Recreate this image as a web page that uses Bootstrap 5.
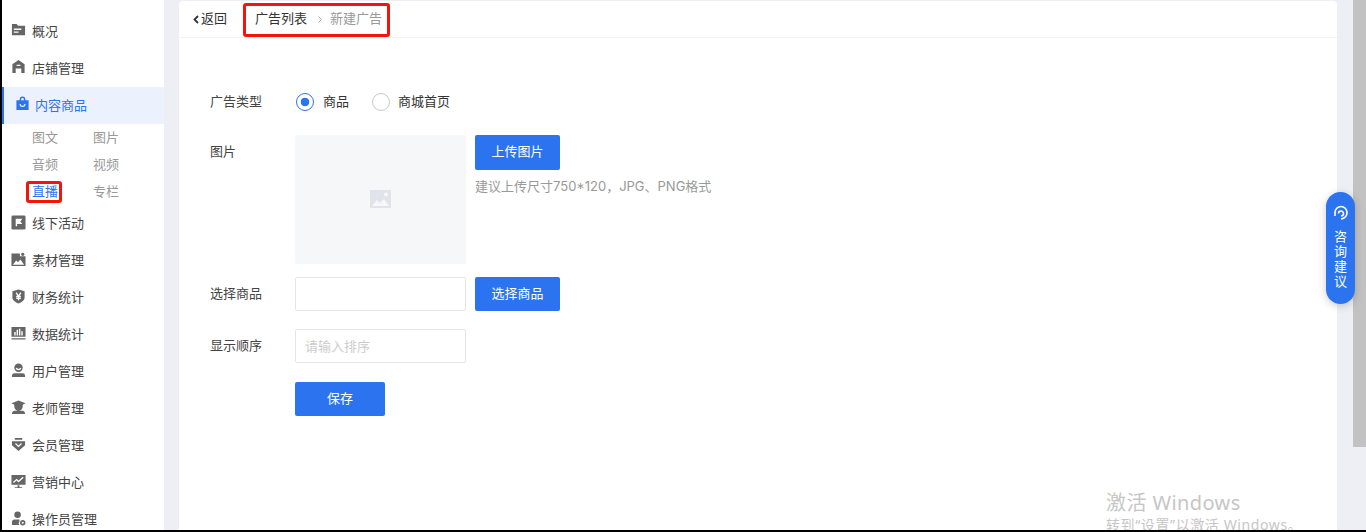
<!DOCTYPE html>
<html lang="en">
<head>
<meta charset="UTF-8">
<title>新建广告</title>
<link rel="stylesheet" href="https://cdn.jsdelivr.net/npm/bootstrap@5.3.0/dist/css/bootstrap.min.css">
<script defer src="https://cdn.jsdelivr.net/npm/bootstrap@5.3.0/dist/js/bootstrap.bundle.min.js"></script>
<style>
html, body { height: 532px; overflow: hidden; }
body { font-family: "Noto Sans", "Noto Sans CJK SC", sans-serif; font-size: 13px; color: #333; background: #000; }
.shell { height: 530px; margin-left: 2px; background: #eeeff4; overflow: hidden; }
.side { width: 162px; flex: none; background: #fff; padding-top: 13px; }
.side-item { height: 37px; display: flex; align-items: center; padding-left: 9px; gap: 6px; color: #444; }
.side-item svg { width: 15px; height: 15px; flex: none; fill: #666; margin-top: -4px; }
.side-item.on { background: #ebf2fe; color: #2c74ef; border-left: 2px solid #2c74ef; padding-left: 11px; gap: 5px; }
.side-item.on svg { fill: #2c74ef; }
.sub-grid { display: grid; grid-template-columns: 61px 61px; grid-auto-rows: 27px; padding-left: 30px; padding-bottom: .5px; align-items: center; color: #999; }
.sub-live { color: #2c74ef; position: relative; }
.mark-box { position: absolute; border: 3px solid #f5140c; border-radius: 3px; }
.mark-live { left: -6px; top: -1px; width: 36px; height: 22px; }
.main-card { width: 1158px; margin-left: 15px; height: 540px; background: #fff; border-radius: 4px; margin-top: 1px; flex: none; }
.top-bar { height: 37px; border-bottom: 1px solid #f3f3f5; }
.back-link { width: 65px; padding-left: 14px; color: #333; gap: 2px; }
.back-link svg { width: 6px; height: 9px; fill: none; stroke: #333; stroke-width: 1.8; }
.crumb { position: relative; padding-left: 11px; gap: 8px; }
.crumb .past { color: #999; }
.crumb svg { width: 4px; height: 7px; fill: none; stroke: #aaa; stroke-width: 1; margin-left: 3px; }
.mark-crumb { left: -1px; top: -6px; width: 147px; height: 34px; }
.form-area { padding: 54px 0 0 31px; }
.lbl { width: 85px; flex: none; color: #444; }
.type-row { margin-bottom: 23px; }
.radio-dot { width: 18px; height: 18px; border-radius: 50%; border: 1px solid #c8c8c8; background: #fff; flex: none; }
.radio-dot.sel { border-color: #2c74ef; background: radial-gradient(circle, #2c74ef 0 4px, #fff 4.6px); margin-left: 1px; }
.radio-text { margin: 0 23px 0 9px; }
.pic-row { margin-bottom: 13px; }
.pic-lbl { padding-top: 7px; }
.pic-box { width: 171px; height: 129px; background: #f6f7f9; border-radius: 2px; }
.pic-box svg { width: 21px; height: 18px; fill: #e1e3ea; }
.pic-side { margin-left: 9px; }
.blue-btn { background: #2c74ef; color: #fff; border: 0; border-radius: 2px; width: 85px; height: 35px; font-size: 13px; padding: 0; }
.blue-btn:hover { background: #2c74ef; color: #fff; }
.save-btn { width: 90px; height: 34px; }
.hint { color: #999; margin-top: 7px; font-family: Inter, "Noto Sans CJK SC", sans-serif; }
.pick-row { margin-bottom: 18px; }
.pick-row .blue-btn { height: 34px; margin-left: 9px; }
.order-row { margin-bottom: 19px; }
.box-input { width: 171px; height: 34px; border: 1px solid #e5e5e5; border-radius: 2px; padding: 0 9px; font-size: 13px; font-family: inherit; outline: 0; }
.box-input::placeholder { color: #ccc; }
.track { width: 13px; flex: none; margin-left: 16px; background: #eeeff4; }
.thumb { height: 447px; background: #c2c2c2; }
.help-pill { position: absolute; left: 1326px; top: 192px; width: 29px; height: 112px; background: #2c74ef; color: #fff; border-radius: 15px; box-shadow: 0 2px 8px rgba(0,0,0,.2); padding-top: 13px; }
.help-pill svg { width: 16px; height: 16px; margin-bottom: 9px; fill: none; stroke: #fff; stroke-width: 1.6; }
.pill-text { writing-mode: vertical-rl; text-orientation: upright; letter-spacing: 2px; line-height: 1; margin-right: 2px; }
.win-mark { position: absolute; left: 1106px; top: 491px; color: #c6c6c6; line-height: 1.2; white-space: nowrap; }
.win-mark .big { font-size: 20px; margin-bottom: 2px; letter-spacing: .4px; }
.win-mark .sm { font-size: 14px; letter-spacing: .6px; }
.bottom-edge { position: absolute; left: 0; top: 530px; width: 100%; height: 2px; background: #000; }
.ic-cut { fill: #fff; }
.ic-line { fill: none; stroke: #fff; stroke-width: 1.4; }
</style>
</head>
<body>
<div class="shell d-flex">
  <aside class="side">
    <div class="side-item"><svg viewBox="0 0 16 16"><path d="M1 2h5l1.500 2H15v10H1zM3 7v1.500h8V7zM3 10v1.500h5V10z" fill-rule="evenodd"/></svg>概况</div>
    <div class="side-item"><svg viewBox="0 0 16 16"><path d="M8 1l6.500 4.500V15H11v-5H5v5H1.500V5.500zM6 6v1.500h4V6z" fill-rule="evenodd"/></svg>店铺管理</div>
    <div class="side-item on"><svg viewBox="0 0 16 16"><path d="M5 4.500V3.500a3 3 0 0 1 6 0v1h3.500V15h-13V4.500zM6.500 4.500h3v-1a1.500 1.500 0 0 0-3 0zM4.800 8.500a3.200 3.200 0 0 0 6.400 0H10a2 2 0 0 1-4 0z" fill-rule="evenodd"/></svg>内容商品</div>
    <div class="sub-grid">
      <span>图文</span><span>图片</span>
      <span>音频</span><span>视频</span>
      <span class="sub-live">直播<span class="mark-box mark-live"></span></span><span>专栏</span>
    </div>
    <div class="side-item"><svg viewBox="0 0 16 16"><rect x="0.500" y="0.500" width="15" height="15" rx="1.500"/><path class="ic-cut" d="M5 4h7l-2 2.800 2 2.700H6.500V12H5z"/></svg>线下活动</div>
    <div class="side-item"><svg viewBox="0 0 16 16"><path d="M0.500 1.500h9v3h6v10.500h-15z"/><circle cx="12.500" cy="2.500" r="1.700"/><path class="ic-cut" d="M2 13.500l3.500-4.500 2 2 2.500-3 4 5.500z"/></svg>素材管理</div>
    <div class="side-item"><svg viewBox="0 0 16 16"><path d="M8 .5l6.500 2V9c0 3-3 5-6.500 6.500C4.500 14 1.500 12 1.500 9V2.500z"/><path class="ic-line" d="M5.500 4L8 7.500 10.500 4M8 7.500V12M5.500 8h5M5.500 10h5"/></svg>财务统计</div>
    <div class="side-item"><svg viewBox="0 0 16 16"><path d="M.5 1h15v10.500H.5zM.5 13h15v1.500H.5z"/><path class="ic-cut" d="M3.500 6.500h1.500V10H3.500zM6 4h1.500v6H6zM8.500 3h1.500v7H8.500zM11 5.500h1.500V10H11z"/></svg>数据统计</div>
    <div class="side-item"><svg viewBox="0 0 16 16"><circle cx="8" cy="5" r="4.500"/><path class="ic-line" d="M5.500 5.500a2.800 2.800 0 0 0 5 0"/><path d="M4 11h8a3 3 0 0 1 3 3v1H1v-1a3 3 0 0 1 3-3z"/></svg>用户管理</div>
    <div class="side-item"><svg viewBox="0 0 16 16"><path d="M8 .5l7.500 3-3 1.500V7a4.500 4.500 0 0 1-9 0V5L.5 3.500zM4 11.500h8a3 3 0 0 1 3 2.500v1H1v-1a3 3 0 0 1 3-2.500z"/></svg>老师管理</div>
    <div class="side-item"><svg viewBox="0 0 16 16"><path d="M4 1h8v1.800H4zM1 4.500h14v4.300L8 15 1 8.800z"/><path class="ic-line" d="M4.800 7L8 10l3.200-3"/></svg>会员管理</div>
    <div class="side-item"><svg viewBox="0 0 16 16"><path d="M.5 1h15v10.500H.5zM7 12h2v2h3v1H4v-1h3z"/><path class="ic-line" d="M2.500 9l3.500-3 2 2 5-4.500"/></svg>营销中心</div>
    <div class="side-item"><svg viewBox="0 0 16 16"><circle cx="7" cy="4" r="3.500"/><path d="M4 9h5v2a3 3 0 0 0 0 4H1v-3a3 3 0 0 1 3-3z"/><circle cx="12.500" cy="12.500" r="2" fill="none" stroke="#666" stroke-width="1.800"/></svg>操作员管理</div>
  </aside>
  <main class="main-card">
    <div class="top-bar d-flex align-items-center">
      <div class="back-link d-flex align-items-center"><svg viewBox="0 0 6 9"><path d="M5 1L1.500 4.500 5 8"/></svg>返回</div>
      <div class="crumb d-flex align-items-center">
        <span>广告列表</span><svg viewBox="0 0 4 7"><path d="M.5.5l3 3-3 3"/></svg><span class="past">新建广告</span>
        <span class="mark-box mark-crumb"></span>
      </div>
    </div>
    <div class="form-area">
      <div class="d-flex align-items-center type-row">
        <div class="lbl">广告类型</div>
        <span class="radio-dot sel"></span><span class="radio-text">商品</span>
        <span class="radio-dot"></span><span class="ms-2">商城首页</span>
      </div>
      <div class="d-flex pic-row">
        <div class="lbl pic-lbl">图片</div>
        <div class="pic-box d-flex align-items-center justify-content-center">
          <svg viewBox="0 0 21 18"><path d="M0 0h21v18H0zM2 16h17l-5-7-4 4-3-3zM16 2.500a2 2 0 1 0 .01 0z" fill-rule="evenodd"/></svg>
        </div>
        <div class="pic-side">
          <button class="btn blue-btn" type="button">上传图片</button>
          <div class="hint">建议上传尺寸750*120，JPG、PNG格式</div>
        </div>
      </div>
      <div class="d-flex align-items-center pick-row">
        <div class="lbl">选择商品</div>
        <input class="box-input" type="text">
        <button class="btn blue-btn" type="button">选择商品</button>
      </div>
      <div class="d-flex align-items-center order-row">
        <div class="lbl">显示顺序</div>
        <input class="box-input" type="text" placeholder="请输入排序">
      </div>
      <div class="d-flex">
        <div class="lbl"></div>
        <button class="btn blue-btn save-btn" type="button">保存</button>
      </div>
    </div>
  </main>
  <div class="track"><div class="thumb"></div></div>
</div>
<div class="help-pill d-flex flex-column align-items-center">
  <svg viewBox="0 0 16 16"><path d="M2 11V7.500a6 6 0 0 1 12 0c0 4-3 6-6 6.500"/><path d="M5.500 8.500a2.500 2.500 0 1 1 5 0c0 1.500-1.200 2.500-2.500 2.500"/></svg>
  <div class="pill-text">咨询建议</div>
</div>
<div class="win-mark"><div class="big">激活 Windows</div><div class="sm">转到“设置”以激活 Windows。</div></div>
<div class="bottom-edge"></div>
</body>
</html>
